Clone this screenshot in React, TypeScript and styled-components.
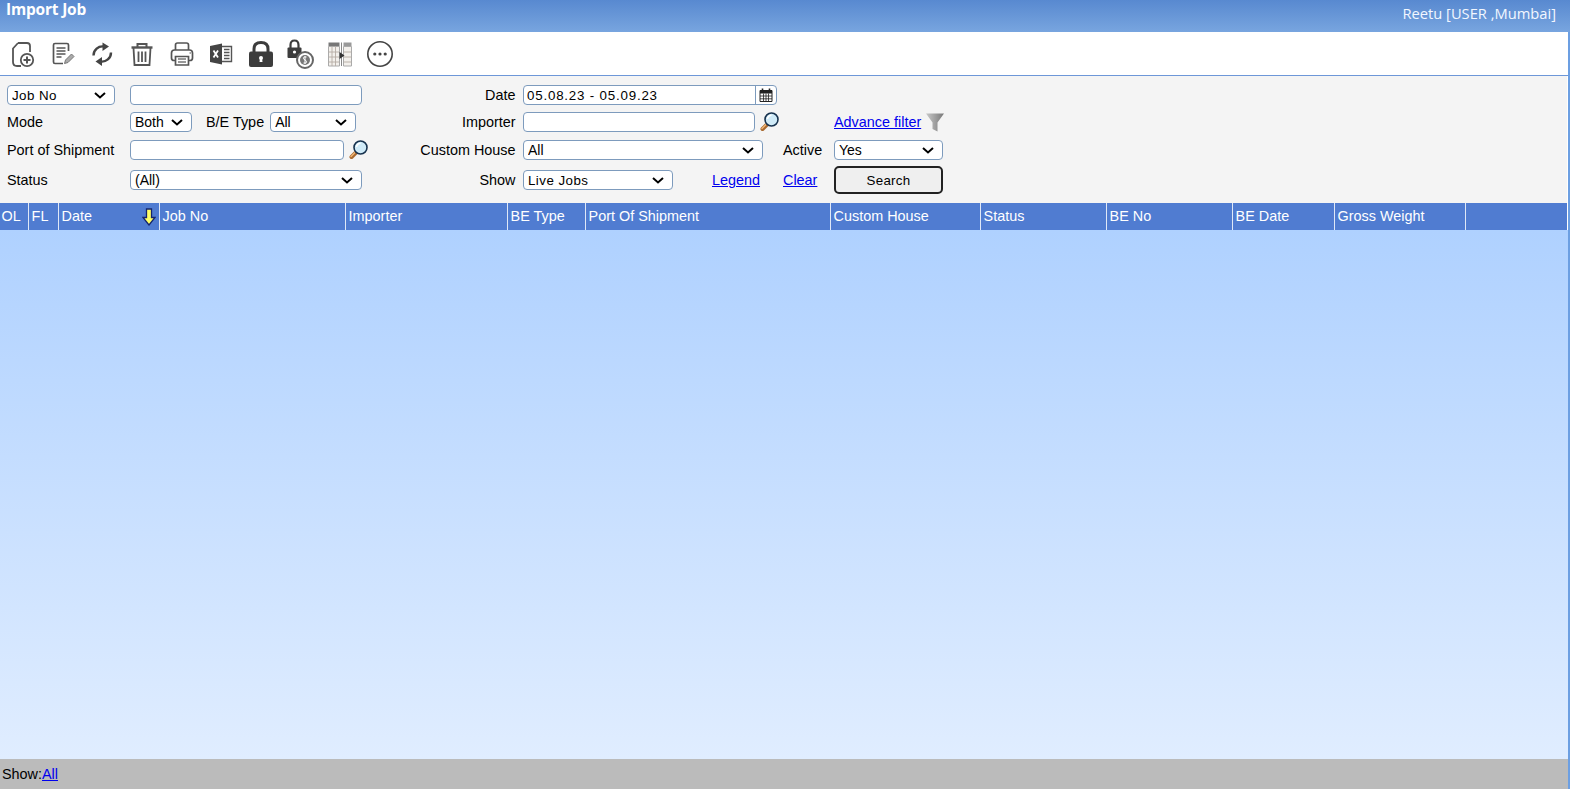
import React from "react";
import styled, { createGlobalStyle } from "styled-components";

const GlobalStyle = createGlobalStyle`
	html, body {
		margin: 0;
		padding: 0;
		height: 100%;
		overflow: hidden;
		background: #fff;
		font-family: "Liberation Sans", Arial, sans-serif;
		font-size: 14.4px;
		color: #000;
	}
`;

const Page = styled.div`
	display: flex;
	flex-direction: column;
	height: 796px;
	padding-bottom: 7px;
	box-sizing: border-box;
`;

const TitleBar = styled.header`
	display: flex;
	justify-content: space-between;
	height: 32px;
	padding: 0 14px 0 6px;
	box-sizing: border-box;
	background: linear-gradient(#5889d0, #78a5df);
	color: #fff;
`;

const Title = styled.h1`
	margin: 0;
	font-family: "Open Sans", sans-serif;
	font-size: 15.5px;
	font-weight: 700;
	line-height: 19px;
	letter-spacing: -0.2px;
`;

const UserName = styled.span`
	font-family: "Open Sans", sans-serif;
	font-size: 14.7px;
	line-height: 26px;
	color: #f2f7ff;
`;

const Shell = styled.div`
	display: flex;
	flex-direction: column;
	flex: 1;
	min-height: 0;
	border-right: 2px solid #6c9fe2;
`;

const Toolbar = styled.nav`
	display: flex;
	align-items: center;
	gap: 11.7px;
	height: 44px;
	padding: 1px 0 0 9px;
	box-sizing: border-box;
	background: #fff;
	border-bottom: 1px solid #6d97d8;
	svg {
		display: block;
		overflow: visible;
		filter: blur(0.4px);
	}
`;

const FilterPanel = styled.form`
	display: grid;
	grid-template-columns: 123px 270px 123px 260px 51px 109px;
	grid-template-rows: 26px 28px 28px 32px;
	align-items: center;
	height: 127px;
	margin-right: 1px;
	padding: 6px 0 0 7px;
	box-sizing: border-box;
	background: #f4f4f4;
`;

const Cell = styled.div<{ $gap?: number; $spread?: boolean }>`
	display: flex;
	align-items: center;
	gap: ${(p) => p.$gap ?? 0}px;
	justify-content: ${(p) => (p.$spread ? "space-between" : "flex-start")};
	white-space: nowrap;
`;

const Label = styled.label<{ $right?: boolean }>`
	display: block;
	line-height: 16px;
	white-space: nowrap;
	text-align: ${(p) => (p.$right ? "right" : "left")};
	padding-right: ${(p) => (p.$right ? 7.5 : 0)}px;
`;

const InlineLabel = styled(Label)`
	margin: 0 6px 0 14px;
`;

const fieldStyle = `
	height: 20px;
	box-sizing: border-box;
	border: 1px solid #7d9bbd;
	border-radius: 4px;
	background-color: #fff;
	font-family: "Liberation Sans", Arial, sans-serif;
	color: #000;
	outline: none;
`;

const TextField = styled.input<{ $w: number }>`
	${fieldStyle}
	width: ${(p) => p.$w}px;
	padding: 0 4px;
`;

const chevron =
	"url(\"data:image/svg+xml,%3Csvg xmlns='http://www.w3.org/2000/svg' width='12' height='7' viewBox='0 0 12 7'%3E%3Cpath d='M1 1l5 4.500 5-4.500' fill='none' stroke='%23000' stroke-width='2'/%3E%3C/svg%3E\")";

const Select = styled.select<{ $w: number; $spaced?: boolean }>`
	${fieldStyle}
	appearance: none;
	width: ${(p) => p.$w}px;
	padding: 0 0 0 4px;
	font-size: ${(p) => (p.$spaced ? "13.33px" : "14px")};
	letter-spacing: ${(p) => (p.$spaced ? "0.45px" : "0")};
	background-image: ${chevron};
	background-repeat: no-repeat;
	background-position: right 8px center;
`;

const DateBox = styled.div`
	${fieldStyle}
	display: flex;
	width: 254px;
`;

const DateInput = styled.input`
	flex: 1;
	min-width: 0;
	border: 0;
	padding: 0 3px;
	background: transparent;
	font-family: "Liberation Sans", Arial, sans-serif;
	font-size: 13.33px;
	letter-spacing: 0.8px;
	outline: none;
`;

const DateButton = styled.span`
	display: flex;
	align-items: center;
	justify-content: center;
	width: 20px;
	border-left: 1px solid #7d9bbd;
`;

const TextLink = styled.a<{ $inset?: number }>`
	color: #0000ee;
	text-decoration: underline;
	margin-left: ${(p) => p.$inset ?? 0}px;
`;

const SearchButton = styled.button`
	width: 109px;
	height: 28px;
	box-sizing: border-box;
	border: 2px solid #222;
	border-radius: 5px;
	background: #efefef;
	font-family: "Liberation Sans", Arial, sans-serif;
	font-size: 13.33px;
	letter-spacing: 0.3px;
	color: #000;
`;

const GridHead = styled.div`
	display: flex;
	height: 27px;
	margin-right: 1px;
	background: #507cd1;
	color: #fff;
`;

const HeadCell = styled.div<{ $w: number }>`
	position: relative;
	width: ${(p) => p.$w}px;
	box-sizing: border-box;
	padding-left: 2.6px;
	border-right: 1px solid #dfe8f7;
	line-height: 26px;
	white-space: nowrap;
	&:first-child {
		padding-left: 1.5px;
	}
`;

const HeadFill = styled.div`
	flex: 1;
`;

const SortMark = styled.svg`
	position: absolute;
	right: 3px;
	top: 5px;
`;

const GridBody = styled.main`
	flex: 1;
	background: linear-gradient(#afd1ff, #e0edff);
`;

const Footer = styled.footer`
	display: flex;
	align-items: center;
	height: 30px;
	padding-left: 2px;
	background: #bbbbbb;
`;

const Ink = "#555";

const AddFileIcon = () => (
	<svg width="28" height="28" viewBox="0 0 28 28" fill="none" stroke={Ink} strokeWidth="1.8">
		<path d="M9 3h9q3 0 3 3v6M9 3 4 8.500V22q0 4 4 4h4" />
		<circle cx="18" cy="20" r="6.200" />
		<path d="M18 16.500v7M14.500 20h7" strokeWidth="2" />
	</svg>
);

const EditIcon = () => (
	<svg width="28" height="28" viewBox="0 0 28 28" fill="none" stroke={Ink} strokeWidth="1.700">
		<path d="M19.500 11V5q0-1.500-1.500-1.500H6Q4.500 3.500 4.500 5v17q0 1.500 1.500 1.500h8" />
		<path d="M7.500 8h9M7.500 11h9M7.500 14h9M7.500 17h5" strokeWidth="1.500" />
		<path d="m15.500 23.500 1-3.500 6-6 2.500 2.500-6 6z" fill="#aaa" stroke="#777" strokeWidth="1" />
	</svg>
);

const RefreshIcon = () => (
	<svg width="28" height="28" viewBox="0 0 28 28" fill="none" stroke="#444" strokeWidth="2.400">
		<path d="M5.500 15.500A9 9 0 0 1 16 6.500" />
		<path d="M23 12.500A9 9 0 0 1 12.500 21.500" />
		<path d="m14.500 2.500 6.500 4-6.500 4.500z" fill="#444" stroke="none" />
		<path d="m14 17-6.500 4.500L14 26z" fill="#444" stroke="none" />
	</svg>
);

const TrashIcon = () => (
	<svg width="28" height="28" viewBox="0 0 28 28" fill="none" stroke={Ink} strokeWidth="1.800">
		<path d="M3.500 7.500h21" strokeWidth="2.400" />
		<path d="M9.500 7V4h9v3" strokeWidth="2" />
		<path d="M5.500 8l1 17h15l1-17" />
		<path d="M10.500 11.500V22M14 11.500V22M17.500 11.500V22" strokeWidth="1.800" />
	</svg>
);

const PrintIcon = () => (
	<svg width="28" height="28" viewBox="0 0 28 28" fill="none" stroke={Ink} strokeWidth="1.700">
		<path d="M7.500 10V5q0-2 2-2h9q2 0 2 2v5" />
		<path d="M7.500 20.500H6q-2.500 0-2.500-2.500v-5q0-3 3-3h15q3 0 3 3v5q0 2.500-2.500 2.500h-1.500" />
		<path d="M7.500 16.500h13v8.500h-13z" />
		<path d="M10 19h8M10 22h8" stroke="#777" strokeWidth="1.600" />
		<path d="M21.500 13h1.500" stroke="#888" />
	</svg>
);

const ExcelIcon = () => (
	<svg width="28" height="28" viewBox="0 0 28 28">
		<path d="M3 6 15 3.500v21L3 22z" fill="#444" />
		<path d="M15 6.500h9.500v15H15" fill="none" stroke="#555" strokeWidth="1.400" />
		<path d="M17 9.500h5.500M17 12.500h5.500M17 15.500h5.500M17 18.500h5.500" stroke="#555" strokeWidth="1.500" />
		<path d="m6.500 10.500 4.500 7M11 10.500l-4.500 7" stroke="#fff" strokeWidth="1.800" />
	</svg>
);

const LockIcon = () => (
	<svg width="28" height="28" viewBox="0 0 28 28">
		<path d="M7 13V9q0-6.500 7-6.500T21 9v4" fill="none" stroke="#3c3c3c" strokeWidth="3" />
		<path d="M2 13.500q0-2 2-2h20q2 0 2 2V25q0 2-2 2H4q-2 0-2-2z" fill="#3c3c3c" />
		<circle cx="14" cy="18" r="2" fill="#fff" />
		<path d="M13 18h2l.5 4h-3z" fill="#fff" />
	</svg>
);

const LockCoinIcon = () => (
	<svg width="28" height="28" viewBox="0 0 28 28">
		<path d="M3.500 8V5q0-4.500 4-4.500t4 4.500v3" fill="none" stroke="#3c3c3c" strokeWidth="2.200" />
		<path d="M.5 8.500q0-1 1-1h12q1 0 1 1V17q0 1-1 1h-12q-1 0-1-1z" fill="#3c3c3c" />
		<circle cx="7.500" cy="12" r="1.600" fill="#fff" />
		<circle cx="18" cy="20" r="8" fill="#fff" stroke="#666" strokeWidth="2" />
		<circle cx="18" cy="20" r="5" fill="#777" />
		<path d="M19.500 17h-2q-1 0-1 1.200t1.500 1.800 1.500 1.800-1 1.200h-2M18 16v8" fill="none" stroke="#fff" strokeWidth="1" />
	</svg>
);

const ColumnsIcon = () => (
	<svg width="28" height="28" viewBox="0 0 28 28">
		<path d="M1.500 2.500h11v4h-11z" fill="#777" />
		<path d="M16.500 2.500h8v4h-8z" fill="#999" />
		<path d="M1.500 6.500h11V26h-11zM16.500 6.500h8V26h-8z" fill="#f3f0ec" stroke="#aaa" />
		<path d="M5 6.500V26M8.500 6.500V26M1.500 12h11M1.500 17h11M1.500 22h11M16.500 12h8M16.500 17h8M16.500 22h8" stroke="#b5aca5" strokeWidth="0.900" />
		<path d="M14.500 2.500V26" stroke="#888" />
		<path d="m12.500 12 5 3.500-5 3.500z" fill="#333" />
	</svg>
);

const MoreIcon = () => (
	<svg width="28" height="28" viewBox="0 0 28 28" fill="none">
		<circle cx="14" cy="14" r="12.200" stroke="#444" strokeWidth="1.600" />
		<circle cx="8.800" cy="14" r="1.600" fill="#444" />
		<circle cx="14" cy="14" r="1.600" fill="#444" />
		<circle cx="19.200" cy="14" r="1.600" fill="#444" />
	</svg>
);

const Magnifier = () => (
	<svg width="20" height="20" viewBox="0 0 20 20" style={{ flexShrink: 0 }}>
		<path d="m6.500 13-4 4" stroke="#a9692f" strokeWidth="4" strokeLinecap="round" />
		<path d="m6 12.500-4 4" stroke="#f2b878" strokeWidth="1.400" strokeLinecap="round" />
		<circle cx="11.500" cy="7.500" r="6.500" fill="#cfeaf7" stroke="#17324e" strokeWidth="1.600" />
		<path d="M7.500 7q.5-3.500 4-3.800" fill="none" stroke="#fff" strokeWidth="1.600" />
	</svg>
);

const Funnel = () => (
	<svg width="18" height="19" viewBox="0 0 18 19" style={{ flexShrink: 0, marginRight: -1 }}>
		<defs>
			<linearGradient id="funnelShade" x1="0" x2="1" y1="0" y2="0">
				<stop offset="0" stopColor="#c9c9c9" />
				<stop offset="1" stopColor="#777" />
			</linearGradient>
		</defs>
		<path d="M0 .5h18L11.500 9.500v9l-5-2.500V9.500z" fill="url(#funnelShade)" />
	</svg>
);

const CalendarIcon = () => (
	<svg width="14" height="14" viewBox="0 0 14 14">
		<path d="M1 2.500h12V13.500H1z" fill="#fff" stroke="#222" strokeWidth="1" />
		<path d="M1 2.500h12V5.500H1z" fill="#222" />
		<path d="M3.500.5v3M10.500.5v3" stroke="#222" strokeWidth="1.600" />
		<path d="M4.500 5.500v8M7 5.500v8M9.500 5.500v8M1 8h12M1 10.800h12" stroke="#222" strokeWidth="0.800" />
	</svg>
);

const toolIcons = [
	AddFileIcon,
	EditIcon,
	RefreshIcon,
	TrashIcon,
	PrintIcon,
	ExcelIcon,
	LockIcon,
	LockCoinIcon,
	ColumnsIcon,
	MoreIcon,
];

const columns = [
	{ name: "OL", width: 29 },
	{ name: "FL", width: 30 },
	{ name: "Date", width: 101, sorted: true },
	{ name: "Job No", width: 186 },
	{ name: "Importer", width: 162 },
	{ name: "BE Type", width: 78 },
	{ name: "Port Of Shipment", width: 245 },
	{ name: "Custom House", width: 150 },
	{ name: "Status", width: 126 },
	{ name: "BE No", width: 126 },
	{ name: "BE Date", width: 102 },
	{ name: "Gross Weight", width: 131 },
];

const App: React.FC = () => {
	return (
		<Page>
			<GlobalStyle />
			<TitleBar>
				<Title>Import Job</Title>
				<UserName>Reetu [USER ,Mumbai]</UserName>
			</TitleBar>
			<Shell>
				<Toolbar>
					{toolIcons.map((Icon, i) => (
						<Icon key={i} />
					))}
				</Toolbar>
				<FilterPanel onSubmit={(e) => e.preventDefault()}>
					<Cell>
						<Select $w={108} $spaced defaultValue="Job No">
							<option>Job No</option>
						</Select>
					</Cell>
					<Cell>
						<TextField $w={232} />
					</Cell>
					<Label $right>Date</Label>
					<Cell>
						<DateBox>
							<DateInput defaultValue="05.08.23 - 05.09.23" />
							<DateButton>
								<CalendarIcon />
							</DateButton>
						</DateBox>
					</Cell>
					<span />
					<span />

					<Label>Mode</Label>
					<Cell>
						<Select $w={62}>
							<option>Both</option>
						</Select>
						<InlineLabel>B/E Type</InlineLabel>
						<Select $w={86}>
							<option>All</option>
						</Select>
					</Cell>
					<Label $right>Importer</Label>
					<Cell $gap={5}>
						<TextField $w={232} />
						<Magnifier />
					</Cell>
					<span />
					<Cell $spread>
						<TextLink href="#">Advance filter</TextLink>
						<Funnel />
					</Cell>

					<Label>Port of Shipment</Label>
					<Cell $gap={5}>
						<TextField $w={214} />
						<Magnifier />
					</Cell>
					<Label $right>Custom House</Label>
					<Cell>
						<Select $w={240}>
							<option>All</option>
						</Select>
					</Cell>
					<Label>Active</Label>
					<Cell>
						<Select $w={109}>
							<option>Yes</option>
						</Select>
					</Cell>

					<Label>Status</Label>
					<Cell>
						<Select $w={232}>
							<option>(All)</option>
						</Select>
					</Cell>
					<Label $right>Show</Label>
					<Cell>
						<Select $w={150} $spaced>
							<option>Live Jobs</option>
						</Select>
						<TextLink href="#" $inset={39}>
							Legend
						</TextLink>
					</Cell>
					<Cell>
						<TextLink href="#">Clear</TextLink>
					</Cell>
					<Cell>
						<SearchButton type="submit">Search</SearchButton>
					</Cell>
				</FilterPanel>
				<GridHead>
					{columns.map((col) => (
						<HeadCell key={col.name} $w={col.width}>
							{col.name}
							{col.sorted && (
								<SortMark width="14" height="18" viewBox="0 0 14 18">
									<path d="M4.500 1h5v8.500H13L7 17 1 9.500h3.500z" fill="#ffff66" stroke="#14246e" strokeWidth="1.300" />
								</SortMark>
							)}
						</HeadCell>
					))}
					<HeadFill />
				</GridHead>
				<GridBody />
				<Footer>
					Show:<TextLink href="#">All</TextLink>
				</Footer>
			</Shell>
		</Page>
	);
};

export default App;
